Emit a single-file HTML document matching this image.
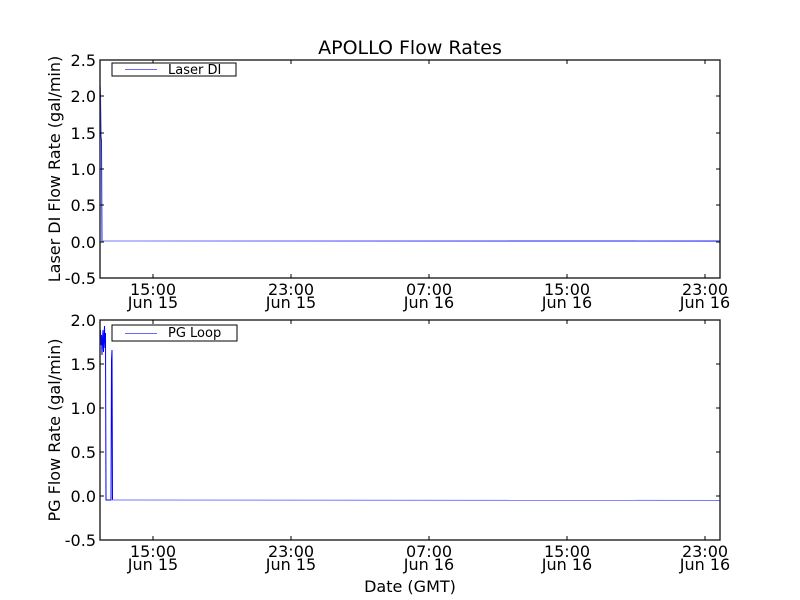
<!DOCTYPE html>
<html><head><meta charset="utf-8"><style>
html,body{margin:0;padding:0;background:#fff;}
svg{display:block;font-family:"DejaVu Sans","Liberation Sans",sans-serif;}
</style></head><body>
<svg width="800" height="600" viewBox="0 0 800 600" xmlns="http://www.w3.org/2000/svg">
<rect width="800" height="600" fill="#fff"/>
<text x="410" y="54" font-size="19" text-anchor="middle">APOLLO Flow Rates</text>

<!-- top axes -->
<g>
<polyline fill="none" stroke="#0000ff" stroke-width="1" points="100,84 100.5,95 101,137 101.5,140 102,241 720,241" opacity="0.9"/>
<polyline fill="none" stroke="#7777ff" stroke-width="1" points="102,241 720,241.5"/>
<rect x="100" y="60" width="620" height="218" fill="none" stroke="#222" stroke-width="1.4"/>
<g stroke="#000" stroke-width="1">
<path d="M100 96h4M100 133h4M100 169h4M100 205h4M100 242h4M720 96h-4M720 133h-4M720 169h-4M720 205h-4M720 242h-4"/>
<path d="M153 278v-4M291 278v-4M429 278v-4M567 278v-4M705 278v-4M153 60v4M291 60v4M429 60v4M567 60v4M705 60v4"/>
</g>
<g font-size="16" text-anchor="end">
<text x="96" y="66">2.5</text><text x="96" y="102">2.0</text><text x="96" y="139">1.5</text><text x="96" y="175">1.0</text><text x="96" y="211">0.5</text><text x="96" y="248">0.0</text><text x="96" y="284">-0.5</text>
</g>
<g font-size="16" text-anchor="middle">
<text x="153" y="295">15:00</text><text x="153" y="308">Jun 15</text>
<text x="291" y="295">23:00</text><text x="291" y="308">Jun 15</text>
<text x="429" y="295">07:00</text><text x="429" y="308">Jun 16</text>
<text x="567" y="295">15:00</text><text x="567" y="308">Jun 16</text>
<text x="705" y="295">23:00</text><text x="705" y="308">Jun 16</text>
</g>
<text transform="translate(60,169) rotate(-90)" font-size="16" text-anchor="middle">Laser DI Flow Rate (gal/min)</text>
<rect x="112" y="63" width="124" height="13" fill="#fff" stroke="#000" stroke-width="1"/>
<line x1="125" y1="69.5" x2="157" y2="69.5" stroke="#6666ff" stroke-width="1"/>
<text x="168" y="74" font-size="13">Laser DI</text>
</g>

<!-- bottom axes -->
<g>
<polyline fill="none" stroke="#0000ff" stroke-width="1" points="100,340 100.5,330 101,345 101.5,335 102,355 102.5,340 103,330 103.5,352 104,338 104.5,326 105,348 105.5,333 106,500 111,500 111.5,360 112,350 112.5,500"/>
<polyline fill="none" stroke="#7777ff" stroke-width="1" points="112.5,500 720,500.5"/>
<rect x="100" y="320" width="620" height="220" fill="none" stroke="#222" stroke-width="1.4"/>
<g stroke="#000" stroke-width="1">
<path d="M100 364h4M100 408h4M100 452h4M100 496h4M720 364h-4M720 408h-4M720 452h-4M720 496h-4"/>
<path d="M153 540v-4M291 540v-4M429 540v-4M567 540v-4M705 540v-4M153 320v4M291 320v4M429 320v4M567 320v4M705 320v4"/>
</g>
<g font-size="16" text-anchor="end">
<text x="96" y="326">2.0</text><text x="96" y="370">1.5</text><text x="96" y="414">1.0</text><text x="96" y="458">0.5</text><text x="96" y="502">0.0</text><text x="96" y="546">-0.5</text>
</g>
<g font-size="16" text-anchor="middle">
<text x="153" y="557">15:00</text><text x="153" y="570">Jun 15</text>
<text x="291" y="557">23:00</text><text x="291" y="570">Jun 15</text>
<text x="429" y="557">07:00</text><text x="429" y="570">Jun 16</text>
<text x="567" y="557">15:00</text><text x="567" y="570">Jun 16</text>
<text x="705" y="557">23:00</text><text x="705" y="570">Jun 16</text>
</g>
<text x="410" y="592" font-size="16" text-anchor="middle">Date (GMT)</text>
<text transform="translate(60,430) rotate(-90)" font-size="16" text-anchor="middle">PG Flow Rate (gal/min)</text>
<rect x="112" y="325" width="125" height="16" fill="#fff" stroke="#000" stroke-width="1"/>
<line x1="125" y1="333.5" x2="157" y2="333.5" stroke="#6666ff" stroke-width="1"/>
<text x="168" y="337" font-size="13">PG Loop</text>
</g>
</svg>
</body></html>
